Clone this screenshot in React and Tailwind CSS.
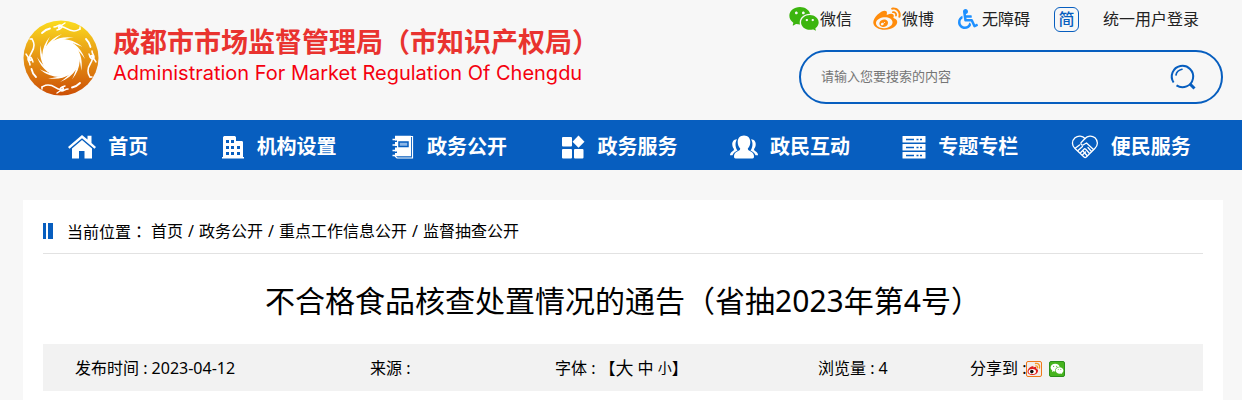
import { RiWechatFill, RiWeiboFill } from 'react-icons/ri'
import { FaWheelchair } from 'react-icons/fa'

const navItems = [
    { name: '首页', Icon: IconHome },
    { name: '机构设置', Icon: IconBuilding },
    { name: '政务公开', Icon: IconNotebook },
    { name: '政务服务', Icon: IconTiles },
    { name: '政民互动', Icon: IconPeople },
    { name: '专题专栏', Icon: IconServers },
    { name: '便民服务', Icon: IconHeart },
]

const crumbs = ['首页', '政务公开', '重点工作信息公开', '监督抽查公开']

const RAYS = [0, 30, 60, 90, 120, 150, 180, 210, 240, 270, 300, 330]
const BIRDS = [0, 90, 180, 270]

function SunBirdLogo({ className }) {
    return (
        <svg className={className} viewBox="-38 -38 76 76" aria-hidden="true">
            <defs>
                <linearGradient id="sun" x1="0" y1="0" x2="0" y2="1">
                    <stop offset="0" stopColor="#fbdc1f" />
                    <stop offset="0.5" stopColor="#e59314" />
                    <stop offset="1" stopColor="#cc4f05" />
                </linearGradient>
            </defs>
            <circle r="37.5" fill="url(#sun)" />
            <circle r="17.5" fill="#fff" />
            {RAYS.map((deg) => (
                <path key={deg} transform={`rotate(${deg})`} fill="#fff" d="M-18.500 4C-20 -7 -13 -19 1 -24C-8 -18 -14.500 -11 -16 0Z" />
            ))}
            {BIRDS.map((deg) => (
                <g key={deg} transform={`rotate(${deg})`} fill="none" stroke="#fff" strokeLinecap="round">
                    <path strokeWidth="1.8" d="M-19 -25C-17 -27 -14 -29 -11 -29.500" />
                    <path strokeWidth="1.600" d="M-7 -31C-4 -31 -3 -33 -1 -33C2 -33 1 -29.500 -1 -29.500C-3 -29.500 -3 -32 0 -31.500C6 -31 6 -27 13 -27C16 -27 17 -28 19 -29" />
                    <path strokeWidth="1.400" d="M1 -33L4 -35M19 -29L19 -31M-1 -29L-4 -28" />
                </g>
            ))}
        </svg>
    )
}

function IconHome() {
    return (
        <svg className="w-7 h-6" viewBox="0 0 28 24" fill="currentColor">
            <path d="M14 0L0 12l1.500 1.800L14 3.200l12.500 10.600L28 12l-4.500-4V.8h-4V4.600z" />
            <path d="M14 5L4 13.500V23.500h7V16h5.500v7.500H24V13.500z" />
        </svg>
    )
}

function IconBuilding() {
    return (
        <svg className="w-6 h-6" viewBox="0 0 24 24" fill="currentColor">
            <path fillRule="evenodd" d="M2 2.500C2 1.500 3 1 4 1h9c1 0 2 .5 2 1.500V6h5.500c1 0 1.500.5 1.500 1.500V22h1v1.500H1V22h1zM5 5v3h3V5zM10 5v3h3V5zM5 11v3h3v-3zM10 11v3h3v-3zM16 11v3h3v-3zM5 17v3h3v-3zM10 17v3h3v-3zM16 17v3h3v-3z" />
        </svg>
    )
}

function IconNotebook() {
    return (
        <svg className="w-6 h-6" viewBox="0 0 24 24" fill="none">
            <path stroke="currentColor" strokeWidth="1.200" d="M20 1.500h1.500v21.500H6l-2-2" />
            <path fill="currentColor" d="M4 .8h16v20.500H4v-3.300h2v-1.500H4v-4h2V11H4V7h2V5.500H4z" />
            <path stroke="currentColor" strokeWidth="1.300" d="M1.500 4.500H5M1.500 10H5M1.500 15.500H5M1.500 20.500H5" />
            <path fill="#8db6e6" stroke="#075ebf" strokeWidth="1.500" d="M8 7h9v4.500H8z" />
        </svg>
    )
}

function IconTiles() {
    return (
        <svg className="w-6 h-6" viewBox="0 0 24 24" fill="currentColor">
            <rect x="1" y="2" width="10" height="9.500" rx="1" />
            <rect x="1" y="14" width="10" height="9.500" rx="1" />
            <rect x="13" y="14" width="9.500" height="9.500" rx="1" />
            <path d="M17.500 0.500l6 6.300-6 6-6-6z" />
        </svg>
    )
}

function IconPeople() {
    return (
        <svg className="w-7 h-6" viewBox="0 0 28 24" fill="currentColor">
            <path d="M14 0.500c4 0 6.300 2.800 6.300 6.500 0 2.700-1 5-2.500 6.500 0 1.500 1 2 3 3 2.500 1.300 3.200 3 3.200 5 0 1.200-.5 2-1.500 2h-17c-1 0-1.500-.8-1.500-2 0-2 .7-3.700 3.200-5 2-1 3-1.500 3-3C8.700 12 7.700 9.700 7.700 7c0-3.700 2.300-6.500 6.300-6.500z" />
            <path d="M7 4.300C3.500 4.500 2 7 2.300 10c.2 1.800.8 3 1.700 4 0 1.500-1 2-2.500 3C.5 18 0 18.800 0 20.300h2.500c.8-2.300 2.500-3.500 5-4.800C5.500 13 4.500 8 7 4.300zM21 4.300c3.500.2 5 2.700 4.700 5.700-.2 1.800-.8 3-1.700 4 0 1.500 1 2 2.500 3 1 1 1.500 1.800 1.500 3.300h-2.500c-.8-2.300-2.500-3.500-5-4.800 2-2.500 3-7.500.5-11.200z" />
        </svg>
    )
}

function IconServers() {
    return (
        <svg className="w-6 h-6" viewBox="0 0 24 24">
            {[1, 9, 17].map((y) => (
                <g key={y}>
                    <rect x="0.500" y={y} width="23" height="6.500" rx="0.500" fill="currentColor" />
                    <path d={`M4 ${y + 3.5}h8M14.500 ${y + 3.5}h2M18 ${y + 3.5}h2`} stroke="#075ebf" strokeWidth="1.600" />
                </g>
            ))}
        </svg>
    )
}

function IconHeart() {
    return (
        <svg className="w-7 h-6" viewBox="0 0 28 24" fill="none" stroke="currentColor" strokeWidth="1.300" strokeLinecap="round" strokeLinejoin="round">
            <path d="M14 3.500C11.500.5 7 .3 4 2.800.5 6 .7 10.500 4 13.500l9 8.500c.8.8 1.500.8 2.300 0l8.500-8.500c3.300-3 3.500-7.500.2-10.700C21 .3 16.500.5 14 3.500z" />
            <path d="M14 3.500l-4 4.300c-.5 2.200 1.500 3 3.300 1.500L15.500 8l7 6.500M17 12.500l3.500 4M14.500 14l3.800 4.300M12 16l4 4.500" />
            <path d="M4.500 13l4-3M7 15.500l4.500-4M9.500 17.800l4-4M11.500 20l3-3" />
        </svg>
    )
}

function IconSearch() {
    return (
        <svg className="w-7 h-7" viewBox="0 0 28 28" fill="none" stroke="#075ebf" strokeWidth="2">
            <path d="M4.600 19.500A10.700 10.700 0 1 1 7.500 22.400" />
            <path d="M7 12c.5-3 2.500-5 6-5.800" strokeWidth="1.600" strokeLinecap="round" />
            <path d="M21 21l4.500 4.500" strokeWidth="3" />
        </svg>
    )
}

function IconShareWeibo() {
    return (
        <svg className="w-3.5 h-3.5" viewBox="0 0 14 14" fill="none">
            <path fill="#e0201b" d="M4.500 4.500c1.500-.7 2.300-.2 2 1 2-.8 3.300-.3 2.800 1.200 1.500.4 2 1.300 1.700 2.600C10.500 11.500 8.300 13 5.500 13 2.500 13 .5 11.700.5 9.500c0-1.900 2-4.200 4-5z" />
            <ellipse cx="5.300" cy="9.500" rx="3.700" ry="2.600" fill="#fff" />
            <circle cx="4.800" cy="9.600" r="1.800" fill="#111" />
            <path stroke="#f59a23" strokeWidth="1.300" strokeLinecap="round" d="M8.500 1.500c3-.5 4.700 1.700 4 4.500M8.800 3.900c1.400-.1 2 .6 1.700 1.900" />
        </svg>
    )
}

function TopLinks() {
    return (
        <nav className="flex items-center text-base leading-6 text-[#222] whitespace-nowrap">
            <a href="#wechat" className="flex items-center mr-5">
                <RiWechatFill className="w-8 h-8 text-[#3cb50f]" />微信
            </a>
            <a href="#weibo" className="flex items-center mr-6">
                <RiWeiboFill className="w-[30px] h-[30px] text-[#ff8c0c]" />微博
            </a>
            <a href="#accessible" className="flex items-center gap-1 mr-6">
                <FaWheelchair className="w-5 h-5 text-[#1e90ff]" />无障碍
            </a>
            <a href="#simplified" className="flex items-center justify-center w-[25px] h-[25px] mr-6 rounded-md border border-[#075ebf] text-[#075ebf] font-medium">简</a>
            <a href="#login">统一用户登录</a>
        </nav>
    )
}

export default function App() {
    return (
        <div className="min-h-screen bg-[#f7f7f7] text-black font-['Noto_Sans','Noto_Sans_CJK_SC',sans-serif]">

            {/* 页头 */}
            <header className="flex justify-between h-[120px] pl-[23px] pr-[19px]">
                <a href="#home" className="flex items-start pt-5">
                    <SunBirdLogo className="w-[76px] h-[76px]" />
                    <div className="ml-3.5 pt-[3px]">
                        <h1 className="text-[27px] leading-9 font-bold text-[#e9332f] font-['Noto_Sans_CJK_SC',sans-serif]">成都市市场监督管理局（市知识产权局）</h1>
                        <p className="text-xl leading-7 text-[#f5000f] font-['Inter',sans-serif]">Administration For Market Regulation Of Chengdu</p>
                    </div>
                </a>
                <div className="w-[424px] pt-[3px]">
                    <div className="flex justify-end pr-6">
                        <TopLinks />
                    </div>
                    <form className="flex items-center h-[54px] mt-[15px] pl-5 pr-6 rounded-full border-2 border-[#075ebf]" onSubmit={(e) => e.preventDefault()}>
                        <input
                            type="text"
                            aria-label="搜索"
                            placeholder="请输入您要搜索的内容"
                            className="flex-1 min-w-0 bg-transparent outline-none text-[13px] placeholder:text-[#757575]"
                        />
                        <button type="submit" aria-label="搜索"><IconSearch /></button>
                    </form>
                </div>
            </header>

            {/* 主导航 */}
            <nav className="grid grid-cols-7 h-[50px] pt-[3px] pl-[23px] pr-[26px] bg-[#075ebf] text-white">
                {navItems.map(({ name, Icon }) => (
                    <a key={name} href={`#${name}`} className="flex items-center justify-center gap-3 text-xl font-bold whitespace-nowrap">
                        <Icon />
                        {name}
                    </a>
                ))}
            </nav>

            {/* 正文 */}
            <main className="mt-[30px] ml-[23px] mr-[19px] px-5 pb-[9px] bg-white">
                <div className="flex items-center h-[54px] pt-2 border-b border-[#e2e2e2]">
                    <span className="flex gap-0.5 mr-3.5">
                        <i className="w-[3px] h-4 bg-[#075ebf]" />
                        <i className="w-[5px] h-4 bg-[#075ebf]" />
                    </span>
                    <span className="mr-1 font-['Noto_Sans_CJK_SC',sans-serif]">
                        当前位置<span className="font-['Noto_Sans_CJK_TC',sans-serif]" lang="zh-Hant">：</span>
                    </span>
                    {crumbs.map((name, i) => (
                        <span key={name}>
                            {i > 0 && <span className="mx-[5px]">/</span>}
                            <a href={`#${name}`}>{name}</a>
                        </span>
                    ))}
                </div>

                <h2 className="pt-6 pb-5 text-center text-[30px] leading-[46px]">不合格食品核查处置情况的通告（省抽2023年第4号）</h2>

                <div className="flex h-[47px] items-center pl-8 bg-[#f2f2f2] whitespace-nowrap">
                    <span className="w-[295px]">发布时间 : 2023-04-12</span>
                    <span className="w-[185px]">来源 :</span>
                    <span className="flex items-center w-[263px]">
                        字体 :&nbsp;【
                        <button type="button" className="text-lg mr-1">大</button>
                        <button type="button" className="mr-1">中</button>
                        <button type="button" className="text-sm">小</button>
                        】
                    </span>
                    <span className="w-[152px]">浏览量 : 4</span>
                    <span className="flex items-center">
                        分享到 :
                        <span className="flex gap-[7px] pt-[3px]">
                            <a href="#share-weibo" aria-label="微博" className="flex items-center justify-center w-4 h-4 rounded-xs border border-[#f07818] bg-[#f3ece8]">
                                <IconShareWeibo />
                            </a>
                            <a href="#share-wechat" aria-label="微信" className="flex items-center justify-center w-4 h-4 rounded-xs border border-[#2b8f1c] bg-[#46b41e]">
                                <RiWechatFill className="w-3.5 h-3.5 text-white" />
                            </a>
                        </span>
                    </span>
                </div>
            </main>
        </div>
    )
}
